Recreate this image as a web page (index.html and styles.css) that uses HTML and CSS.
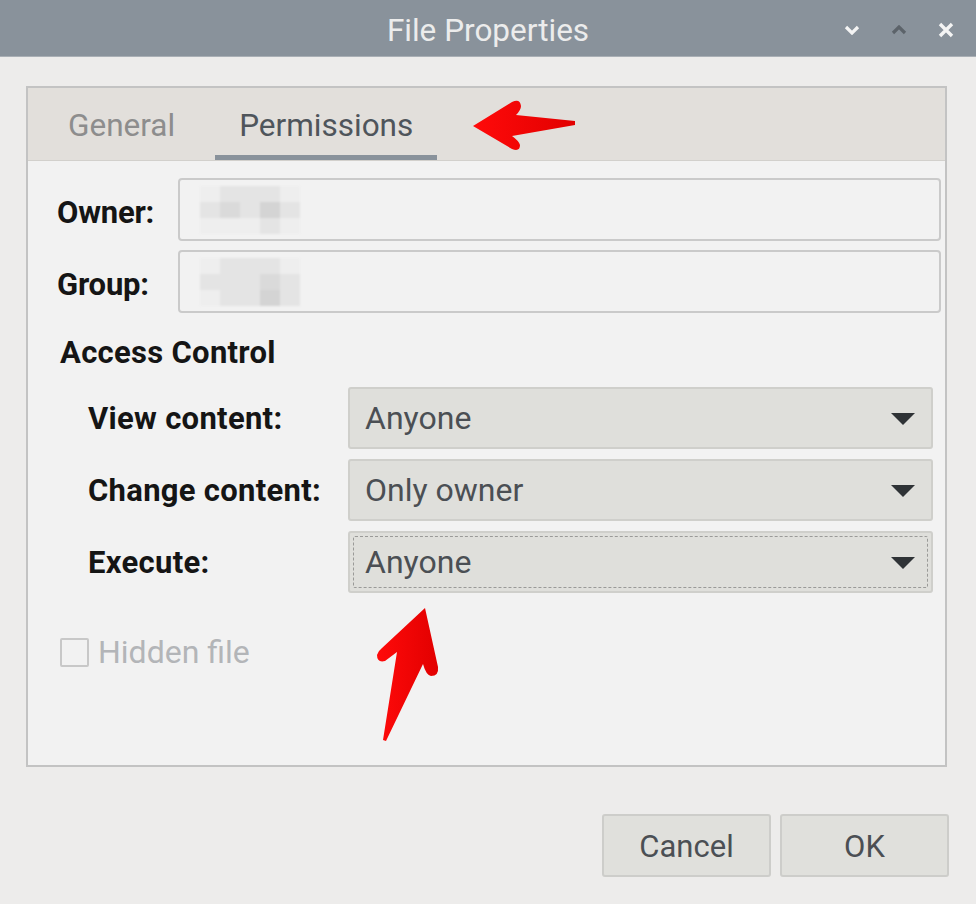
FILE: index.html
```html
<!DOCTYPE html>
<html lang="en">
<head>
<meta charset="utf-8">
<title>File Properties</title>
<link rel="stylesheet" href="styles.css">
</head>
<body>
<div class="window">
  <header class="titlebar">
    <span class="title">File Properties</span>
    <div class="controls">
      <span class="ctl">
        <svg width="16" height="10" viewBox="0 0 16 10"><path d="M2 2 L8 8 L14 2" fill="none" stroke="#f4f4f4" stroke-width="3.2"/></svg>
      </span>
      <span class="ctl">
        <svg width="16" height="10" viewBox="0 0 16 10"><path d="M2 8 L8 2 L14 8" fill="none" stroke="#5c636a" stroke-width="3.2"/></svg>
      </span>
      <span class="ctl">
        <svg width="16" height="16" viewBox="0 0 16 16"><path d="M2 2 L14 14 M14 2 L2 14" fill="none" stroke="#f4f4f4" stroke-width="3.4"/></svg>
      </span>
    </div>
  </header>

  <main class="body">
    <section class="notebook">
      <nav class="tabs">
        <span class="tab">General</span>
        <span class="tab active">Permissions</span>
      </nav>
      <div class="page">
        <div class="id-grid">
          <span class="label low">Owner:</span>
          <div class="entry">
            <div class="blur">
              <i class="c0"></i><i class="c1"></i><i class="c1"></i><i class="c1"></i><i class="c0"></i>
              <i class="c1"></i><i class="c2"></i><i class="c1"></i><i class="c3"></i><i class="c1"></i>
              <i class="c0"></i><i class="c0"></i><i class="c0"></i><i class="c1"></i><i class="c0"></i>
            </div>
          </div>
          <span class="label low">Group:</span>
          <div class="entry">
            <div class="blur">
              <i class="c0"></i><i class="c1"></i><i class="c1"></i><i class="c1"></i><i class="c0"></i>
              <i class="c1"></i><i class="c1"></i><i class="c1"></i><i class="c2"></i><i class="c1"></i>
              <i class="c0"></i><i class="c1"></i><i class="c1"></i><i class="c3"></i><i class="c1"></i>
            </div>
          </div>
        </div>

        <h3 class="section">Access Control</h3>

        <div class="access-grid">
          <span class="label">View content:</span>
          <div class="combo"><span>Anyone</span><span class="caret"></span></div>
          <span class="label">Change content:</span>
          <div class="combo"><span>Only owner</span><span class="caret"></span></div>
          <span class="label">Execute:</span>
          <div class="combo focused"><span>Anyone</span><span class="caret"></span></div>
        </div>

        <label class="check"><span class="box"></span><span>Hidden file</span></label>
      </div>
    </section>

    <footer class="buttons">
      <button class="btn">Cancel</button>
      <button class="btn">OK</button>
    </footer>
  </main>

  <svg class="annot" width="976" height="904" viewBox="0 0 976 904">
    <defs>
      <linearGradient id="red" x1="0" y1="0" x2="1" y2="0">
        <stop offset="0" stop-color="#ff0a0a"/>
        <stop offset="1" stop-color="#e20000"/>
      </linearGradient>
    </defs>
    <path fill="url(#red)" d="M473,126 L512,102 Q520,98 521,106 Q521,110 516,115 L575,121 L575,125 L512,136 Q519,141 520,145 Q520,152 512,149 Z"/>
    <path fill="url(#red)" d="M425,608 L438,667 Q439,676 431,676 Q426,675 423,664 L386,741 L383,740 L397,652 L385,661 Q377,663 377,655 Q378,651 382,648 Z"/>
  </svg>
</div>
</body>
</html>
```

FILE: styles.css
```css
* { box-sizing: border-box; }

html, body {
  margin: 0;
  padding: 0;
}

body {
  width: 976px;
  height: 904px;
  overflow: hidden;
  font-family: Roboto, "Liberation Sans", sans-serif;
}

.window {
  position: relative;
  width: 976px;
  height: 904px;
  background: #edeceb;
  display: flex;
  flex-direction: column;
}

.titlebar {
  height: 57px;
  flex: none;
  background: #89929b;
  border-bottom: 1px solid #a9afb5;
  display: grid;
  grid-template-columns: 1fr auto 1fr;
  align-items: center;
}

.title {
  grid-column: 2;
  color: #ececec;
  font-size: 31.5px;
  padding-top: 4px;
}

.controls {
  grid-column: 3;
  justify-self: end;
  display: flex;
  padding-right: 7px;
}

.ctl {
  width: 47px;
  height: 56px;
  display: flex;
  align-items: center;
  justify-content: center;
  padding-top: 3px;
}

.body {
  flex: 1;
  padding: 29px 29px 0 26px;
  display: flex;
  flex-direction: column;
}

.notebook {
  height: 681px;
  flex: none;
  border: 2px solid #c3c3c3;
  background: #f2f2f2;
  display: flex;
  flex-direction: column;
}

.tabs {
  height: 73px;
  flex: none;
  background: #e2dfdb;
  border-bottom: 1px solid #d2d0cc;
  display: flex;
  padding-left: 16px;
  gap: 16px;
}

.tab {
  padding: 8px 24px 0;
  display: flex;
  align-items: center;
  font-size: 31.5px;
  color: #8d8d8d;
  border-bottom: 5px solid transparent;
}

.tab.active {
  color: #4f555b;
  border-bottom-color: #89929b;
}

.page {
  flex: 1;
  padding: 17px 4px 0 29px;
  display: flex;
  flex-direction: column;
}

.label {
  font-size: 31px;
  letter-spacing: 0.3px;
  font-weight: bold;
  color: #151515;
  display: flex;
  align-items: center;
}

.label.low {
  padding-top: 5px;
  letter-spacing: -0.2px;
}

.id-grid {
  display: grid;
  grid-template-columns: 121px 1fr;
  grid-auto-rows: 63px;
  row-gap: 9px;
}

.entry {
  border: 2px solid #cacaca;
  border-radius: 4px;
  background: #f2f2f2;
  display: flex;
  align-items: center;
  padding-left: 20px;
}

.blur {
  display: grid;
  grid-template-columns: repeat(5, 20px);
  grid-auto-rows: 16px;
  filter: blur(1px);
}

.blur i { display: block; }
.blur .c0 { background: #eeeeee; }
.blur .c1 { background: #e4e4e4; }
.blur .c2 { background: #dadada; }
.blur .c3 { background: #d4d4d4; }

.section {
  margin: 22px 0 16px 3px;
  font-size: 31px;
  letter-spacing: 0.3px;
  line-height: 36px;
  font-weight: bold;
  color: #151515;
}

.access-grid {
  display: grid;
  grid-template-columns: 260px 1fr;
  grid-auto-rows: 62px;
  row-gap: 10px;
  margin: 0 8px 0 31px;
}

.combo {
  position: relative;
  background: #dfdfdb;
  border: 2px solid #cfcfcb;
  border-radius: 3px;
  display: flex;
  align-items: center;
  justify-content: space-between;
  padding: 0 16px 0 15px;
  font-size: 32px;
  color: #4b4f54;
}

.combo.focused::after {
  content: "";
  position: absolute;
  inset: 3px;
  border: 1px dashed #9a9a98;
  border-radius: 2px;
  pointer-events: none;
}

.caret {
  width: 0;
  height: 0;
  border-left: 12px solid transparent;
  border-right: 12px solid transparent;
  border-top: 12px solid #2f3336;
  margin-top: 2px;
}

.check {
  margin: 40px 0 0 3px;
  display: flex;
  align-items: center;
  gap: 9px;
  font-size: 32px;
  color: #b3b5b8;
}

.box {
  width: 29px;
  height: 29px;
  border: 2px solid #c8c8c8;
  border-radius: 2px;
  background: #f2f2f2;
}

.buttons {
  margin-top: 47px;
  display: flex;
  justify-content: flex-end;
  gap: 9px;
  margin-right: -2px;
}

.btn {
  width: 169px;
  height: 63px;
  background: #e0e0dc;
  border: 2px solid #cdcdca;
  border-radius: 3px;
  font-family: Roboto, "Liberation Sans", sans-serif;
  font-size: 31px;
  color: #4b4f54;
  padding: 2px 0 0;
}

.annot {
  position: absolute;
  left: 0;
  top: 0;
  pointer-events: none;
}
```
